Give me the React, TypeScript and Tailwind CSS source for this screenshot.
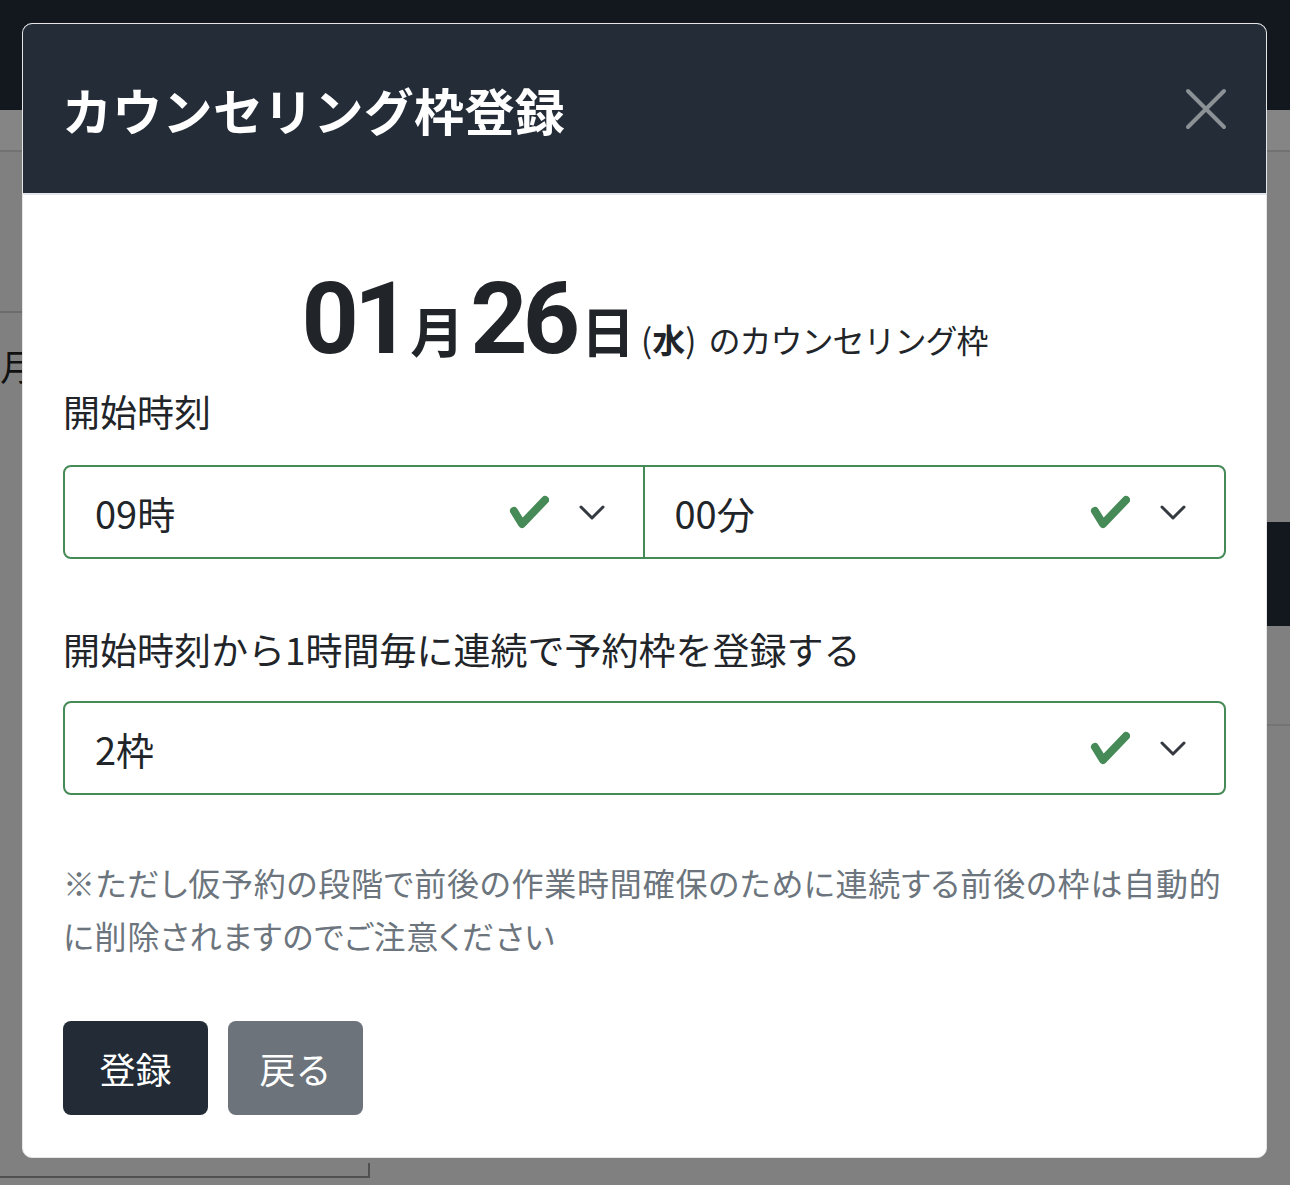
import React from "react";

const jp = "font-['Noto_Sans_CJK_JP','Noto_Sans',sans-serif]";

function CheckMark() {
  return (
    <svg width="40" height="36" viewBox="0 0 40 36" fill="none" className="shrink-0">
      <path d="M5 17 L13 30 L36 6" stroke="#468a57" strokeWidth="8" strokeLinecap="round" strokeLinejoin="round" />
    </svg>
  );
}

function Chevron() {
  return (
    <svg width="26" height="17" viewBox="0 0 26 17" fill="none" className="shrink-0">
      <path d="M2 3 L13 14 L24 3" stroke="#343a40" strokeWidth="3" strokeLinecap="round" strokeLinejoin="round" />
    </svg>
  );
}

function SelectBox({ value, className }: { value: string; className?: string }) {
  return (
    <div className={"flex h-full items-center pl-[30px] pr-[38px] " + (className ?? "")}>
      <span className="flex-1 text-[38px] text-[#212529]">{value}</span>
      <CheckMark />
      <span className="ml-[30px]">
        <Chevron />
      </span>
    </div>
  );
}

export default function App() {
  return (
    <div className={"relative h-[1185px] w-[1290px] overflow-hidden bg-[#808080] " + jp}>
      {/* dimmed page behind the dialog */}
      <div className="h-[110px] bg-[#13171e]" />
      <div className="h-[42px] border-b-2 border-[#727272] bg-[#858585]" />
      <div className="flex">
        <div className="w-[370px]">
          <div className="h-[161px] border-b-2 border-[#6c6c6c]" />
          <div className="pt-[34px] text-[36px] leading-none text-[#111]">月</div>
          <div className="mt-[780px] h-[15px] border-b-2 border-r-2 border-[#505050]" />
        </div>
        <div className="flex-1">
          <div className="h-[370px]" />
          <div className="h-[104px] bg-[#13171e]" />
          <div className="h-[100px] border-b-2 border-[#747474]" />
        </div>
      </div>

      {/* dialog */}
      <div className="absolute inset-0 pl-[22px] pt-[23px]">
        <div className="w-[1245px] overflow-hidden rounded-[10px] border border-[#e6e6e6] bg-white">
          <div className="flex h-[171px] items-center justify-between border-b-2 border-[#e3e6ea] bg-[#232c37] pl-[39px] pr-[39px]">
            <h2 className="text-[50px] font-bold leading-none tracking-[0.3px] text-white">カウンセリング枠登録</h2>
            <svg width="42" height="42" viewBox="0 0 42 42" fill="none">
              <path d="M3 3 L39 39 M39 3 L3 39" stroke="#8c9196" strokeWidth="4" strokeLinecap="round" />
            </svg>
          </div>

          <div className="px-[40px] pb-[42px] pt-[74px]">
            <div className="flex items-baseline justify-center text-[#212529]">
              <span className="font-['Roboto'] text-[100px] font-bold leading-none tracking-[-5px]">01</span>
              <span className="ml-[4px] text-[54px] font-bold leading-none">月</span>
              <span className="ml-[6px] font-['Roboto'] text-[100px] font-bold leading-none tracking-[-5px]">26</span>
              <span className="ml-[6px] text-[54px] font-bold leading-none">日</span>
              <span className="ml-[6px] text-[33px] leading-none">
                (<span className="font-bold">水</span>)
              </span>
              <span className="ml-[12px] text-[32px] leading-none tracking-[-1px]">のカウンセリング枠</span>
            </div>

            <div className="mt-[14px] text-[37px] leading-[56px] text-[#212529]">開始時刻</div>
            <div className="mt-[26px] flex h-[94px] rounded-[8px] border-2 border-[#468a57]">
              <SelectBox value="09時" className="w-1/2 border-r-2 border-[#468a57]" />
              <SelectBox value="00分" className="w-1/2" />
            </div>

            <div className="mt-[62px] text-[37px] leading-[56px] text-[#212529]">開始時刻から1時間毎に連続で予約枠を登録する</div>
            <div className="mt-[24px] h-[94px] rounded-[8px] border-2 border-[#468a57]">
              <SelectBox value="2枠" />
            </div>

            <p className="mt-[61px] text-[32px] leading-[53px] tracking-[0.8px] text-[#6c757d] [font-feature-settings:'palt']">
              <span className="block whitespace-nowrap">※ただし仮予約の段階で前後の作業時間確保のために連続する前後の枠は自動的</span>
              <span className="block whitespace-nowrap">に削除されますのでご注意ください</span>
            </p>

            <div className="mt-[59px] flex gap-[20px]">
              <button className="h-[94px] w-[145px] rounded-[8px] bg-[#222b36] text-[36px] text-white">登録</button>
              <button className="h-[94px] w-[135px] rounded-[8px] bg-[#6c737b] text-[36px] text-white">戻る</button>
            </div>
          </div>
        </div>
      </div>
    </div>
  );
}
